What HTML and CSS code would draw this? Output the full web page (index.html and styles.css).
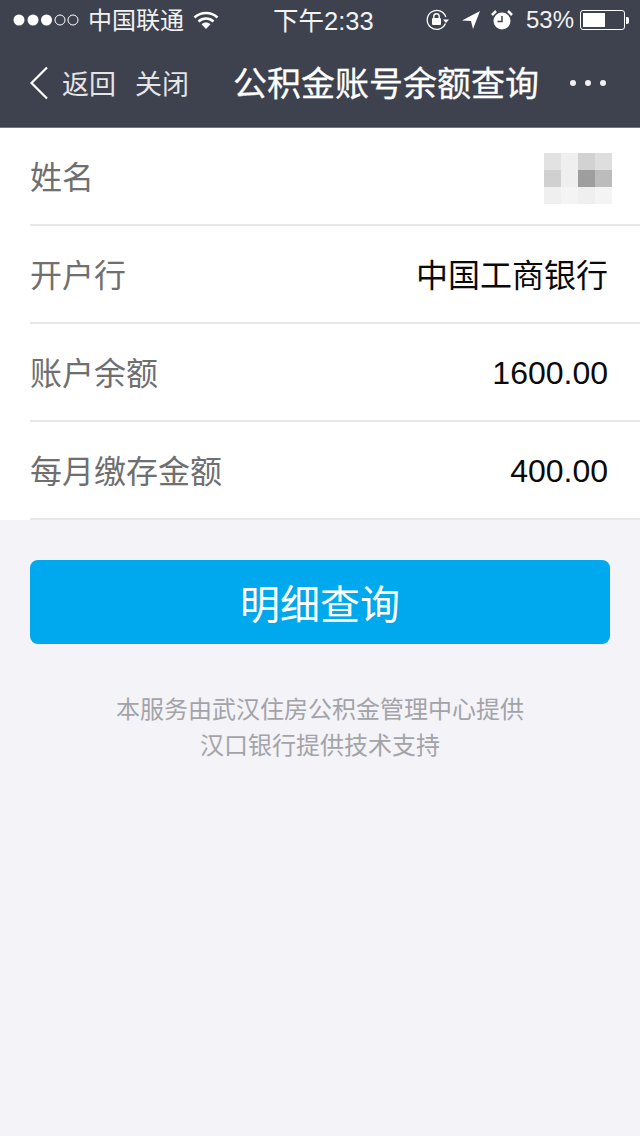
FILE: index.html
```html
<!DOCTYPE html>
<html lang="zh-CN">
<head>
    <meta charset="UTF-8">
    <meta name="viewport" content="width=device-width, initial-scale=1.0">
    <title>公积金账号余额查询</title>
    <link rel="stylesheet" href="styles.css">
</head>
<body>

<div class="header">
    <div class="status-bar">
        <div class="status-left">
            <svg class="signal" width="68" height="14" viewBox="0 0 68 14">
                <circle cx="7" cy="7" r="5.5" fill="#fff"/>
                <circle cx="21" cy="7" r="5.5" fill="#fff"/>
                <circle cx="34.500" cy="7" r="5.500" fill="#fff"/>
                <circle cx="48" cy="7" r="5" fill="none" stroke="#fff" stroke-width="1"/>
                <circle cx="61" cy="7" r="5" fill="none" stroke="#fff" stroke-width="1"/>
            </svg>
            <span class="carrier">中国联通</span>
            <svg class="wifi" width="26" height="20" viewBox="0 0 26 20">
                <path d="M1.500 7.500C8 1.500 18 1.500 24.500 7.500" fill="none" stroke="#fff" stroke-width="2.600"/>
                <path d="M5.500 11.500C10 7.500 16 7.500 20.500 11.500" fill="none" stroke="#fff" stroke-width="2.600"/>
                <path d="M8.500 14.200C11 12 15 12 17.500 14.200L13 19Z" fill="#fff"/>
            </svg>
        </div>
        <div class="status-time">下午2:33</div>
        <div class="status-right">
            <svg width="24" height="22" viewBox="0 0 24 22">
                <path d="M19.500 14.500A9.500 9.500 0 1 1 19.800 8" fill="none" stroke="#fff" stroke-width="1.300"/>
                <path d="M17 10.500h6l-3 3.500Z" fill="#fff"/>
                <rect x="6" y="9" width="9" height="7" rx="1" fill="#fff"/>
                <path d="M7.800 9V7.500a2.700 2.700 0 0 1 5.400 0V9" fill="none" stroke="#fff" stroke-width="1.400"/>
            </svg>
            <svg class="arrow" width="20" height="20" viewBox="0 0 20 20">
                <path d="M19 1L1 10.500l9 .5 2 8Z" fill="#fff"/>
            </svg>
            <svg class="alarm" width="22" height="22" viewBox="0 0 22 22">
                <circle cx="11" cy="12" r="8.500" fill="#fff"/>
                <path d="M11 7v5.500H6.500" fill="none" stroke="#3d424e" stroke-width="1.500"/>
                <path d="M1 6l4-4M21 6l-4-4" stroke="#fff" stroke-width="2.500"/>
            </svg>
            <span class="battery-pct">53%</span>
            <div class="battery">
                <div class="battery-body"><div class="battery-fill"></div></div>
                <div class="battery-cap"></div>
            </div>
        </div>
    </div>
    <div class="nav-bar">
        <svg class="back-icon" width="20" height="34" viewBox="0 0 20 34">
            <path d="M18 1.500L2.500 17 18 32.500" fill="none" stroke="#fff" stroke-width="2.200"/>
        </svg>
        <span class="nav-link">返回</span>
        <span class="nav-link nav-close">关闭</span>
        <h1 class="nav-title">公积金账号余额查询</h1>
        <div class="nav-more"><i></i><i></i><i></i></div>
    </div>
</div>

<div class="info-list">
    <div class="info-row">
        <span class="info-label">姓名</span>
        <div class="mosaic">
            <i class="m1"></i><i class="m2"></i><i class="m3"></i><i class="m4"></i>
            <i class="m5"></i><i class="m2"></i><i class="m6"></i><i class="m7"></i>
            <i class="m2"></i><i class="m8"></i><i class="m2"></i><i class="m8"></i>
        </div>
    </div>
    <div class="info-row">
        <span class="info-label">开户行</span>
        <span class="info-value info-cjk">中国工商银行</span>
    </div>
    <div class="info-row">
        <span class="info-label">账户余额</span>
        <span class="info-value">1600.00</span>
    </div>
    <div class="info-row">
        <span class="info-label">每月缴存金额</span>
        <span class="info-value">400.00</span>
    </div>
</div>

<div class="action">
    <button class="detail-btn">明细查询</button>
</div>

<div class="footer-note">
    <p>本服务由武汉住房公积金管理中心提供</p>
    <p>汉口银行提供技术支持</p>
</div>

</body>
</html>
```

FILE: styles.css
```css
:root {
    --header-bg: #3d424e;
    --page-bg: #f3f3f8;
    --line: #e8e8ea;
    --blue: #00a8ee;
}

* {
    box-sizing: border-box;
}

body {
    margin: 0;
    height: 1136px;
    overflow: hidden;
    background-color: var(--page-bg);
    font-family: "Liberation Sans", "Noto Sans CJK SC", sans-serif;
}

.header {
    height: 128px;
    background-color: var(--header-bg);
    color: #fff;
    border-bottom: 1px solid #74777f;
}

.status-bar {
    height: 40px;
    position: relative;
    display: flex;
    justify-content: space-between;
    align-items: center;
    padding: 0 11px 0 12px;
    font-size: 24px;
    color: #f2f2f3;
}

.status-left {
    display: flex;
    align-items: center;
}

.carrier {
    margin-left: 8px;
    padding-bottom: 4px;
}

.wifi {
    margin-left: 9px;
    margin-bottom: 1px;
}

.status-time {
    position: absolute;
    left: 273px;
    top: 5px;
    font-size: 25.500px;
    line-height: 32px;
}

.status-right {
    display: flex;
    align-items: center;
}

.arrow {
    margin-left: 11px;
}

.alarm {
    margin-left: 10px;
}

.battery-pct {
    margin-left: 13px;
    margin-right: 6px;
}

.battery {
    display: flex;
    align-items: center;
}

.battery-body {
    width: 45px;
    height: 20px;
    border: 1px solid #fff;
    border-radius: 3px;
    padding: 2px;
}

.battery-fill {
    width: 22px;
    height: 100%;
    background-color: #fff;
}

.battery-cap {
    width: 3px;
    height: 7px;
    background-color: #fff;
    border-radius: 0 2px 2px 0;
    margin-left: 1px;
}

.nav-bar {
    height: 87px;
    display: flex;
    align-items: center;
    padding: 0 0 2px 29px;
}

.back-icon {
    margin-right: 13px;
}

.nav-link {
    font-size: 27px;
    color: #e4e5e7;
}

.nav-close {
    margin-left: 19px;
}

.nav-title {
    margin: 0 0 2px 44px;
    font-size: 34px;
    font-weight: normal;
    white-space: nowrap;
    -webkit-text-stroke: 0.3px #fff;
}

.nav-more {
    display: flex;
    gap: 9px;
    margin-left: 31px;
}

.nav-more i {
    width: 6px;
    height: 6px;
    border-radius: 50%;
    background-color: #f0f0f1;
}

.info-list {
    background-color: #fff;
    padding-left: 30px;
}

.info-row {
    height: 98px;
    display: flex;
    justify-content: space-between;
    align-items: center;
    padding-right: 32px;
    border-bottom: 2px solid var(--line);
}

.info-label {
    font-size: 32px;
    color: #6f6f6f;
    padding-bottom: 3px;
}

.info-value {
    font-size: 32px;
    color: #0a0a0a;
    padding-top: 2px;
}

.info-cjk {
    padding-top: 0;
    padding-bottom: 3px;
}

.mosaic {
    display: grid;
    grid-template-columns: repeat(4, 17px);
    grid-auto-rows: 17px;
    margin: 4px -4px 0 0;
    filter: blur(0.6px);
}

.m1 { background-color: #e2e2e2; }
.m2 { background-color: #efefef; }
.m3 { background-color: #d2d2d2; }
.m4 { background-color: #dedede; }
.m5 { background-color: #d0d0d0; }
.m6 { background-color: #9e9e9e; }
.m7 { background-color: #bcbcbc; }
.m8 { background-color: #f4f4f4; }

.action {
    padding: 40px 30px 0;
}

.detail-btn {
    display: block;
    width: 100%;
    height: 84px;
    border: none;
    border-radius: 8px;
    background-color: var(--blue);
    color: #fff;
    font-family: inherit;
    font-size: 40px;
}

.footer-note {
    margin-top: 48px;
    text-align: center;
    font-size: 24px;
    line-height: 36px;
    color: #a3a3a8;
}

.footer-note p {
    margin: 0;
}
```
